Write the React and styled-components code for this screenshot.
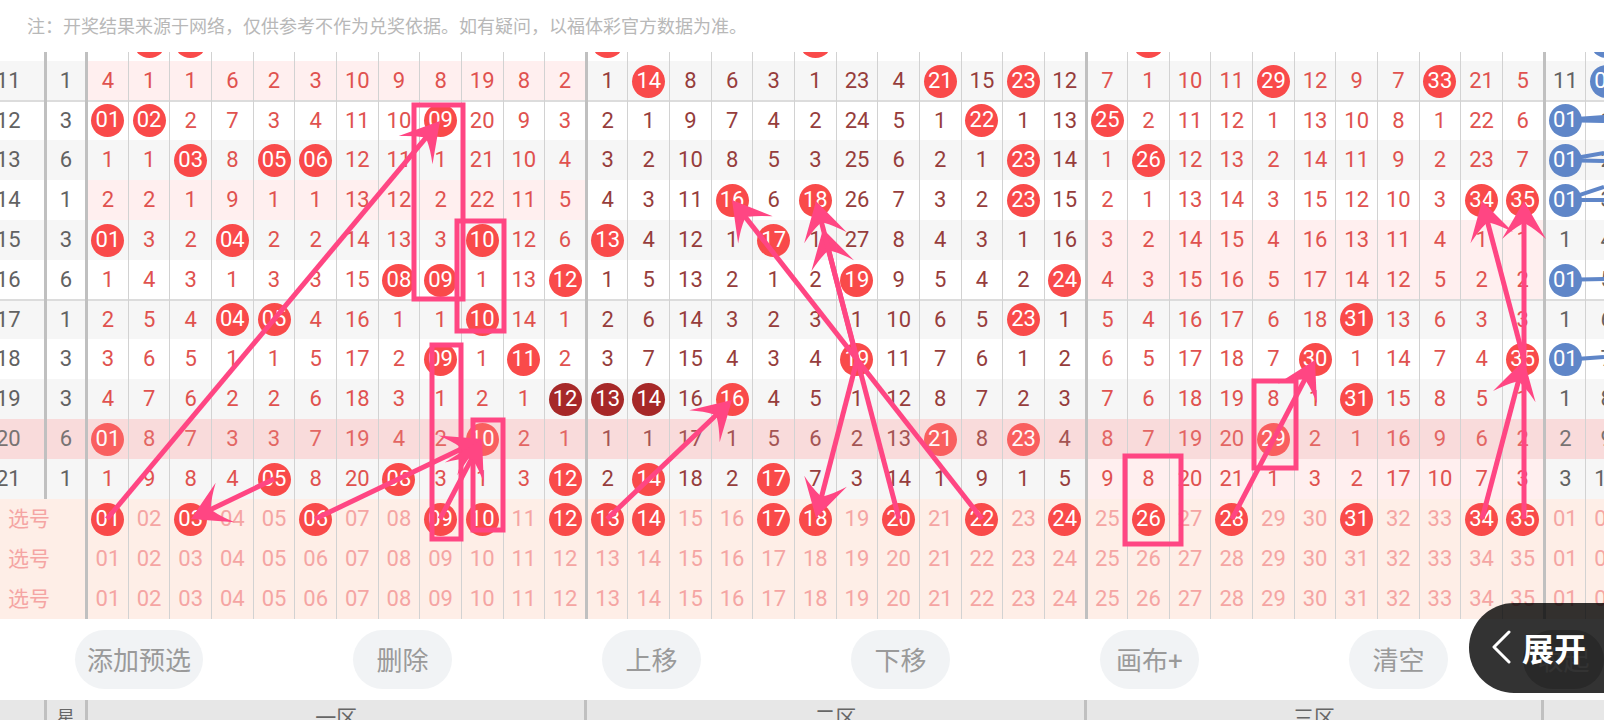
import React, { useState } from "react";
import styled, { createGlobalStyle, css } from "styled-components";

const GlobalStyle = createGlobalStyle`
  * {
    box-sizing: border-box;
  }

  body {
    margin: 0;
    background: #fff;
    font-family: Roboto, "Noto Sans CJK SC", sans-serif;
  }

  button {
    border: 0;
    padding: 0;
    font-family: inherit;
    cursor: pointer;
  }
`;

const Page = styled.div`
  position: relative;
  height: 100vh;
  overflow: hidden;
`;

const Note = styled.p`
  margin: 0;
  padding: 2px 27px 0;
  line-height: 50px;
  font-size: 18px;
  color: #b8b8b8;
`;

const Viewport = styled.div`
  position: relative;
  overflow: hidden;
`;

const Table = styled.table`
  width: calc(100% + 24px);
  table-layout: fixed;
  border-collapse: collapse;
  margin-top: ${p => (p.$scrolled ? "-31px" : "0")};
`;

const IssueCol = styled.col`
  width: 45px;
`;

const tones = {
  red: "#e0524f",
  dark: "#963d3c",
  grey: "#626262",
  pick: "#f5a5a3"
};

const Row = styled.tr`
  height: ${p => (p.$first ? "39px" : "40px")};
  background: ${p => p.$bg};

  td {
    box-shadow: ${p =>
      p.$first
        ? "inset 0 1px #dcdcdc"
        : p.$last
        ? "inset 0 -1px #dcdcdc"
        : "none"};
  }

  ${p =>
    p.$current &&
    css`
      td > span {
        opacity: 0.85;
      }
    `}
`;

const Cell = styled.td`
  padding: 0;
  text-align: center;
  font-size: 22px;
  line-height: 32px;
  color: ${p => tones[p.$tone]};
  background: ${p => (p.$empty ? "#ffefef" : "transparent")};
  border-right: ${p =>
    p.$thick ? "3px solid #c0c0c0" : "1px solid #d2d2d2"};
`;

const IssueCell = styled(Cell)`
  text-align: left;
  text-indent: -4px;
`;

const PickLabel = styled(Cell)`
  text-align: left;
  padding-left: 8px;
  font-size: 21px;
`;

const ballColors = { "*": "#f94a4a", "#": "#a62828", blue: "#5f86c8" };

const Num = styled.span`
  display: block;
`;

const Ball = styled.span`
  display: block;
  width: 33px;
  height: 33px;
  margin: 0 auto;
  border-radius: 50%;
  color: #fff;
  background: ${p => ballColors[p.$kind]};
`;

const PickButton = styled.button`
  display: block;
  width: 33px;
  height: 33px;
  margin: 0 auto;
  border-radius: 50%;
  font-size: 22px;
  line-height: 32px;
  color: ${p => (p.$on ? "#fff" : tones.pick)};
  background: ${p => (p.$on ? "#f94a4a" : "transparent")};
`;

const HeadCell = styled.th`
  height: 36px;
  padding: 0;
  font-size: ${p => (p.$small ? "18px" : "21px")};
  font-weight: 400;
  line-height: 24px;
  color: #666;
  background: #e7e7e7;
  border-right: 3px solid #c0c0c0;
`;

const Overlay = styled.svg`
  position: absolute;
  left: 0;
  top: 0;
  width: 100%;
  height: 100%;
  pointer-events: none;
`;

const Toolbar = styled.div`
  display: flex;
  padding: 11px 0;
`;

const Tools = styled.div`
  flex: 1;
  display: flex;
  justify-content: space-between;
  padding: 0 75px;
`;

const ToolButton = styled.button`
  min-width: 99px;
  height: 59px;
  padding: 0 12px 3px;
  border-radius: 30px;
  font-size: 26px;
  color: #9a9a9a;
  background: #f1f3f5;
`;

const CollapseButton = styled(ToolButton)`
  min-width: 81px;
  color: #fff;
  background: #cbcbcb;
`;

const ExpandButton = styled.button`
  position: absolute;
  right: 0;
  bottom: 27px;
  display: flex;
  align-items: center;
  gap: 10px;
  height: 90px;
  padding: 0 18px 3px 23px;
  border-radius: 45px 0 0 45px;
  font-size: 32px;
  font-weight: 700;
  color: #fff;
  background: rgba(0, 0, 0, 0.8);
`;

// "*" = drawn number, "#" = drawn in a consecutive run, digits = misses
const draws = [
  ["10", "", ". * * . . . . . . . . .", "* . . . . * . . . . . .", ". * . . . . . . . . .", ". *"],
  ["11", "1", "4 1 1 6 2 3 10 9 8 19 8 2", "1 * 8 6 3 1 23 4 * 15 * 12", "7 1 10 11 * 12 9 7 * 21 5", "11 *"],
  ["12", "3", "* * 2 7 3 4 11 10 * 20 9 3", "2 1 9 7 4 2 24 5 1 * 1 13", "* 2 11 12 1 13 10 8 1 22 6", "* 1"],
  ["13", "6", "1 1 * 8 * * 12 11 1 21 10 4", "3 2 10 8 5 3 25 6 2 1 * 14", "1 * 12 13 2 14 11 9 2 23 7", "* 2"],
  ["14", "1", "2 2 1 9 1 1 13 12 2 22 11 5", "4 3 11 * 6 * 26 7 3 2 * 15", "2 1 13 14 3 15 12 10 3 * *", "* 3"],
  ["15", "3", "* 3 2 * 2 2 14 13 3 * 12 6", "* 4 12 1 * 1 27 8 4 3 1 16", "3 2 14 15 4 16 13 11 4 1 1", "1 4"],
  ["16", "6", "1 4 3 1 3 3 15 * * 1 13 *", "1 5 13 2 1 2 * 9 5 4 2 *", "4 3 15 16 5 17 14 12 5 2 2", "* 5"],
  ["17", "1", "2 5 4 * * 4 16 1 1 * 14 1", "2 6 14 3 2 3 1 10 6 5 * 1", "5 4 16 17 6 18 * 13 6 3 3", "1 6"],
  ["18", "3", "3 6 5 1 1 5 17 2 * 1 * 2", "3 7 15 4 3 4 * 11 7 6 1 2", "6 5 17 18 7 * 1 14 7 4 *", "* 7"],
  ["19", "3", "4 7 6 2 2 6 18 3 1 2 1 #", "# # 16 * 4 5 1 12 8 7 2 3", "7 6 18 19 8 1 * 15 8 5 1", "1 8"],
  ["20", "6", "* 8 7 3 3 7 19 4 2 * 2 1", "1 1 17 1 5 6 2 13 * 8 * 4", "8 7 19 20 * 2 1 16 9 6 2", "2 9"],
  ["21", "1", "1 9 8 4 * 8 20 * 3 1 3 *", "2 * 18 2 * 7 3 14 1 9 1 5", "9 8 20 21 1 3 2 17 10 7 3", "3 10"]
];

const zones = [
  { start: 1, size: 12, tone: "red" },
  { start: 13, size: 12, tone: "dark" },
  { start: 25, size: 11, tone: "red" },
  { start: 1, size: 2, tone: "grey", blue: true }
];

const boxes = [
  [414, 105, 49, 194],
  [457, 221, 47, 110],
  [432, 345, 29, 194],
  [473, 420, 30, 110],
  [1254, 381, 42, 87],
  [1125, 456, 56, 88]
];

const arrows = [
  [107, 519, 440, 121],
  [274, 479, 191, 519],
  [315, 519, 482, 439],
  [440, 519, 482, 439],
  [607, 519, 732, 400],
  [982, 519, 732, 200],
  [899, 519, 823, 229],
  [857, 360, 816, 201],
  [857, 360, 816, 518],
  [1232, 519, 1315, 360],
  [1482, 519, 1524, 360],
  [1524, 519, 1524, 201],
  [1524, 360, 1482, 201]
];

const links = [
  [120, 117],
  [120, 121],
  [160, 153],
  [160, 161],
  [200, 187],
  [200, 200],
  [280, 279],
  [360, 357]
];

const pad = n => String(n).padStart(2, "0");

function Arrow({ from, to }) {
  const [x1, y1] = from;
  const [x2, y2] = to;
  const length = Math.hypot(x1 - x2, y1 - y2);
  const ux = (x1 - x2) / length;
  const uy = (y1 - y2) / length;
  // point measured back from the tip, and sideways from the shaft
  const at = (back, side) =>
    `${x2 + ux * back - uy * side},${y2 + uy * back + ux * side}`;

  return (
    <g>
      <path d={`M${x1},${y1} L${at(12, 0)}`} stroke='#ff4683' strokeWidth='5' />
      <path
        d={`M${at(0, 0)} L${at(38, 22)} Q${at(28, 11)} ${at(23, 2)} L${at(
          23,
          -2
        )} Q${at(28, -11)} ${at(38, -22)} Z`}
        fill='#ff4683'
      />
    </g>
  );
}

function Marks() {
  return (
    <Overlay viewBox='0 52 1604 567' preserveAspectRatio='none' fill='none'>
      {links.map(([y1, y2], i) => (
        <path key={i} d={`M1580,${y1 + (y2 - y1) * 0.4} L1604,${y2}`} stroke='#5f86c8' strokeWidth='4' />
      ))}
      {boxes.map(([x, y, w, h], i) => (
        <rect key={i} x={x} y={y} width={w} height={h} stroke='#ff4683' strokeWidth='5' />
      ))}
      {arrows.map(([x1, y1, x2, y2], i) => (
        <Arrow key={i} from={[x1, y1]} to={[x2, y2]} />
      ))}
    </Overlay>
  );
}

function DrawRow({ draw, index }) {
  const [issue, star, ...parts] = draw;
  const current = issue === "20";
  const bg = current ? "#f9dbdb" : index % 2 ? "#f6f6f6" : "#fff";

  return (
    <Row
      $bg={bg}
      $current={current}
      $first={index % 5 === 2}
      $last={index % 5 === 1 && index < draws.length - 1}
    >
      <IssueCell $tone='grey' $thick>
        <Num>{issue}</Num>
      </IssueCell>
      <Cell $tone='grey' $thick>
        <Num>{star}</Num>
      </Cell>
      {zones.map((zone, z) => {
        const values = parts[z].split(" ");
        const empty =
          zone.tone === "red" && !current && !/[*#]/.test(parts[z]);

        return values.map((value, i) => (
          <Cell
            key={`${z}-${i}`}
            $tone={zone.tone}
            $empty={empty}
            $thick={!zone.blue && i === zone.size - 1}
          >
            {value === "*" || value === "#" ? (
              <Ball $kind={zone.blue ? "blue" : value}>
                {pad(zone.start + i)}
              </Ball>
            ) : (
              <Num>{value === "." ? "" : value}</Num>
            )}
          </Cell>
        ));
      })}
    </Row>
  );
}

function PickRow({ picked, onToggle }) {
  return (
    <Row $bg='#feeee7'>
      <PickLabel colSpan={2} $tone='pick' $thick>
        选号
      </PickLabel>
      {zones.map((zone, z) =>
        Array.from({ length: zone.size }, (_, i) => {
          const id = (zone.blue ? 100 : 0) + zone.start + i;
          const on = picked.includes(id);
          return (
            <Cell
              key={id}
              $tone='pick'
              $thick={z < 3 && i === zone.size - 1}
            >
              <PickButton $on={on} aria-pressed={on} onClick={() => onToggle(id)}>
                {pad(zone.start + i)}
              </PickButton>
            </Cell>
          );
        })
      )}
    </Row>
  );
}

function Columns() {
  return (
    <colgroup>
      <IssueCol />
      <col span={38} />
    </colgroup>
  );
}

function App() {
  const [picks, setPicks] = useState([
    [1, 3, 6, 9, 10, 12, 13, 14, 17, 18, 20, 22, 24, 26, 28, 31, 34, 35],
    [],
    []
  ]);

  const toggle = (row, id) => {
    setPicks(
      picks.map((list, i) => {
        if (i !== row) return list;
        return list.includes(id) ? list.filter(n => n !== id) : [...list, id];
      })
    );
  };

  return (
    <Page>
      <GlobalStyle />
      <Note>
        注：开奖结果来源于网络，仅供参考不作为兑奖依据。如有疑问，以福体彩官方数据为准。
      </Note>
      <Viewport>
        <Table $scrolled>
          <Columns />
          <tbody>
            {draws.map((draw, i) => (
              <DrawRow key={draw[0]} draw={draw} index={i} />
            ))}
            {picks.map((picked, i) => (
              <PickRow key={i} picked={picked} onToggle={id => toggle(i, id)} />
            ))}
          </tbody>
        </Table>
        <Marks />
      </Viewport>
      <Toolbar>
        <Tools>
          <ToolButton>添加预选</ToolButton>
          <ToolButton>删除</ToolButton>
          <ToolButton>上移</ToolButton>
          <ToolButton>下移</ToolButton>
          <ToolButton>画布+</ToolButton>
          <ToolButton>清空</ToolButton>
        </Tools>
        <CollapseButton>收起</CollapseButton>
      </Toolbar>
      <Viewport>
        <Table>
          <Columns />
          <thead>
            <tr>
              <HeadCell />
              <HeadCell $small>星</HeadCell>
              <HeadCell colSpan={12}>一区</HeadCell>
              <HeadCell colSpan={12}>二区</HeadCell>
              <HeadCell colSpan={11}>三区</HeadCell>
              <HeadCell colSpan={2} />
            </tr>
          </thead>
        </Table>
      </Viewport>
      <ExpandButton>
        <svg width='20' height='36' viewBox='0 0 20 36' fill='none'>
          <path
            d='M17 3 L2 18 L17 33'
            stroke='#fff'
            strokeWidth='3'
            strokeLinecap='round'
            strokeLinejoin='round'
          />
        </svg>
        展开
      </ExpandButton>
    </Page>
  );
}

export default App;
